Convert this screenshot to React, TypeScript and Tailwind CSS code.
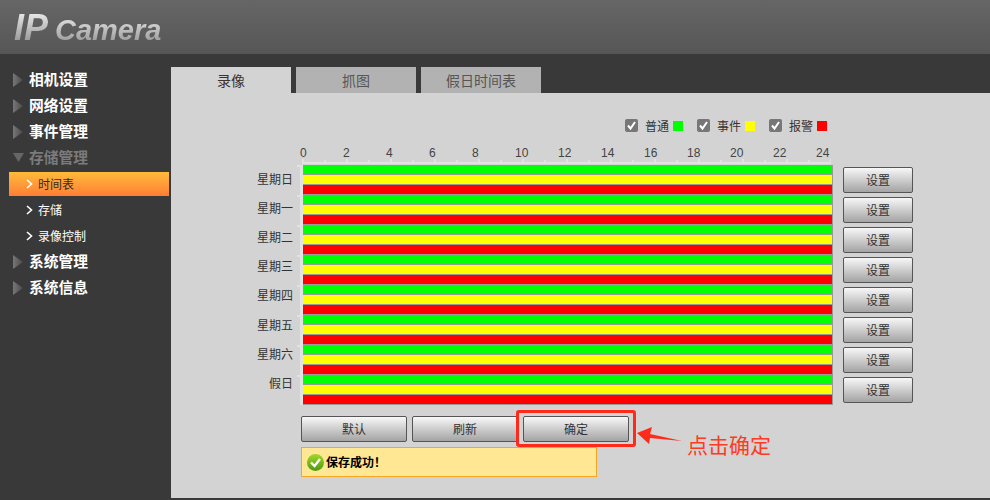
const cjk = "font-['Noto_Sans_CJK_SC','Liberation_Sans',sans-serif]"

const menu = [
  { label: '相机设置' },
  { label: '网络设置' },
  { label: '事件管理' },
  {
    label: '存储管理',
    open: true,
    children: [
      { label: '时间表', active: true },
      { label: '存储' },
      { label: '录像控制' },
    ],
  },
  { label: '系统管理' },
  { label: '系统信息' },
]

const days = ['星期日', '星期一', '星期二', '星期三', '星期四', '星期五', '星期六', '假日']
const hours = [0, 2, 4, 6, 8, 10, 12, 14, 16, 18, 20, 22, 24]
const bands = ['bg-[#00ff00]', 'bg-[#ffff00]', 'bg-[#ff0000]']

function Triangle({ open }: { open?: boolean }) {
  return (
    <svg width="11" height="14" viewBox="0 0 11 14" className="shrink-0">
      <defs>
        <linearGradient id="tri" x1="0" x2="1" y1="0" y2="0">
          <stop offset="0" stopColor="#777" />
          <stop offset="1" stopColor="#4a4a4a" />
        </linearGradient>
      </defs>
      {open ? <path d="M0 2 H11 L5.5 11 Z" fill="#666" /> : <path d="M0 0 L10 7 L0 14 Z" fill="url(#tri)" />}
    </svg>
  )
}

function Chevron() {
  return (
    <svg width="7" height="10" viewBox="0 0 7 10" className="shrink-0">
      <path d="M1 1 L5.5 5 L1 9" fill="none" stroke="#fff" strokeWidth="1.6" />
    </svg>
  )
}

function Sidebar() {
  return (
    <aside className="w-[171px] shrink-0">
      {menu.map((item) => (
        <div key={item.label}>
          <div className="flex h-[26px] items-center gap-[5px] pl-[13px]">
            <Triangle open={item.open} />
            <span className={`pb-[1px] text-[14.75px] font-bold leading-none ${item.open ? 'text-[#7b7b7b]' : 'text-white'}`}>
              {item.label}
            </span>
          </div>
          {item.children && item.children.map((child) => (
            <div
              key={child.label}
              className={
                child.active
                  ? 'ml-[9px] mr-[2px] my-[1px] flex h-[24px] items-center gap-[5px] pl-[17px] bg-gradient-to-b from-[#ffbb3a] to-[#ff7d36] text-[#3a2a1a]'
                  : 'ml-[9px] mr-[2px] flex h-[26px] items-center gap-[5px] pl-[17px] text-white'
              }
            >
              <Chevron />
              <span className="text-[12px] leading-none">{child.label}</span>
            </div>
          ))}
        </div>
      ))}
    </aside>
  )
}

function Tabs() {
  return (
    <div className="flex h-[26px] gap-[5px] bg-[#393939]">
      <div className="flex w-[120px] items-center justify-center bg-[#d3d3d3] text-[14px] text-[#40302c]">录像</div>
      <div className="flex w-[120px] items-center justify-center bg-[#b2b2b2] text-[14px] text-[#555]">抓图</div>
      <div className="flex w-[120px] items-center justify-center bg-[#b2b2b2] text-[14px] text-[#555]">假日时间表</div>
    </div>
  )
}

function LegendItem({ label, color }: { label: string; color: string }) {
  return (
    <div className="flex items-center">
      <span className="flex h-[13px] w-[13px] items-center justify-center rounded-[2px] bg-[#777]">
        <svg width="11" height="11" viewBox="0 0 11 11">
          <path d="M2 5.5 L4.5 8.5 L9 2" fill="none" stroke="#fff" strokeWidth="2" />
        </svg>
      </span>
      <span className="ml-[7px] text-[12px] leading-none text-[#333]">{label}</span>
      <span className={`ml-[4px] h-[10px] w-[10px] ${color}`} />
    </div>
  )
}

function Btn({ label, className }: { label: string; className: string }) {
  return (
    <button
      className={`h-[26px] rounded-[2px] border border-[#555] bg-gradient-to-b from-[#f8f8f8] to-[#a4a4a4] text-[12px] leading-none text-[#333] ${className}`}
    >
      {label}
    </button>
  )
}

function Ruler() {
  return (
    <div className="h-[18px]">
      <div className="ml-[-3px] flex h-[12px]">
        {hours.map((h) => (
          <span key={h} className="w-[43px] shrink-0 font-['Liberation_Sans',sans-serif] text-[12px] leading-[12px] text-[#444]">
            {h}
          </span>
        ))}
      </div>
      <svg width="529" height="6" className="ml-[-1px] block" shapeRendering="crispEdges">
        <rect x="0" y="3" width="530" height="2" fill="#e2e2e2" />
        {Array.from({ length: 25 }).map((_, i) => (
          <rect key={i} x={i * 22} y={i % 2 ? 1 : 0} width="2" height="3" fill="#e2e2e2" />
        ))}
      </svg>
    </div>
  )
}

function Schedule() {
  return (
    <div className="flex">
      <div className="w-[122px] shrink-0 pt-[17px]">
        {days.map((d) => (
          <div key={d} className="flex h-[29.2px] items-center justify-end text-[12px] leading-none text-[#333]">
            {d}
          </div>
        ))}
      </div>
      <div className="ml-[10px] w-[530px] shrink-0">
        <Ruler />
        <div className="ml-[-3px] border-l-[3px] border-[#e2e2e2]">
          <div className="border-r border-[#999]">
            {days.map((d) => (
              <div key={d} className="relative">
                <span className="absolute left-[-6px] top-0 h-[2px] w-[3px] bg-[#e2e2e2]" />
                {bands.map((b) => (
                  <div key={b} className={`h-[10px] border-b border-[#999] ${b}`} />
                ))}
              </div>
            ))}
          </div>
        </div>
      </div>
      <div className="ml-[10px] flex flex-col gap-[4px] pt-[20px]">
        {days.map((d) => (
          <Btn key={d} label="设置" className="w-[70px]" />
        ))}
      </div>
    </div>
  )
}

export default function App() {
  return (
    <div className={`flex h-[500px] w-[990px] flex-col overflow-hidden bg-[#393939] ${cjk}`}>
      <header className="h-[54px] shrink-0 bg-gradient-to-b from-[#666666] to-[#565656] pl-[14px]">
        <div className="flex items-baseline pt-[9px] font-['Liberation_Sans',sans-serif] font-bold italic leading-[38px]">
          <span className="bg-gradient-to-b from-[#f4f4f4] to-[#8a8a8a] bg-clip-text pr-[4px] text-[36px] text-transparent">IP</span>
          <span className="ml-[3px] bg-gradient-to-b from-[#f4f4f4] to-[#8a8a8a] bg-clip-text pr-[2px] text-[29px] text-transparent">Camera</span>
        </div>
      </header>
      <div className="flex flex-1 pt-[13px] pb-[2px]">
        <Sidebar />
        <main className="relative flex-1 bg-[#d3d3d3]">
          <Tabs />
          <div className="flex justify-end gap-[14px] pr-[163px] pt-[26px]">
            <LegendItem label="普通" color="bg-[#00ff00]" />
            <LegendItem label="事件" color="bg-[#ffff00]" />
            <LegendItem label="报警" color="bg-[#ff0000]" />
          </div>
          <div className="pt-[15px]">
            <Schedule />
          </div>
          <div className="ml-[130px] mt-[11px] flex gap-[5px]">
            <Btn label="默认" className="w-[106px]" />
            <Btn label="刷新" className="w-[106px]" />
            <Btn label="确定" className="w-[106px]" />
          </div>
          <div className="ml-[130px] mt-[5px] flex h-[30px] w-[296px] items-center gap-[2px] border border-[#f5a623] bg-[#ffe793] pl-[5px]">
            <svg width="17" height="17" viewBox="0 0 17 17" className="shrink-0">
              <defs>
                <linearGradient id="ok" x1="0" x2="0" y1="0" y2="1">
                  <stop offset="0" stopColor="#a4d62c" />
                  <stop offset="1" stopColor="#4c9a0e" />
                </linearGradient>
              </defs>
              <circle cx="8.5" cy="8.5" r="8.5" fill="url(#ok)" />
              <path d="M4 8.5 L7.5 12 L13 5" fill="none" stroke="#fff" strokeWidth="2.4" />
            </svg>
            <span className="text-[12px] font-bold leading-none text-black">保存成功！</span>
          </div>

          {/* annotation drawn over the screenshot */}
          <div className="absolute left-[345px] top-[343px] h-[37px] w-[120px] rounded-[3px] border-[3px] border-[#ff2a1a]" />
          <svg width="50" height="20" viewBox="0 0 50 20" className="absolute left-[465px] top-[358px]">
            <path d="M1 8 L16 2 L14 9 L46 16 L14 13 L13 19 Z" fill="#ff2a1a" />
          </svg>
          <div className="absolute left-[516px] top-[365px] text-[21px] leading-[24px] text-[#ff3a22]">点击确定</div>
        </main>
      </div>
    </div>
  )
}
